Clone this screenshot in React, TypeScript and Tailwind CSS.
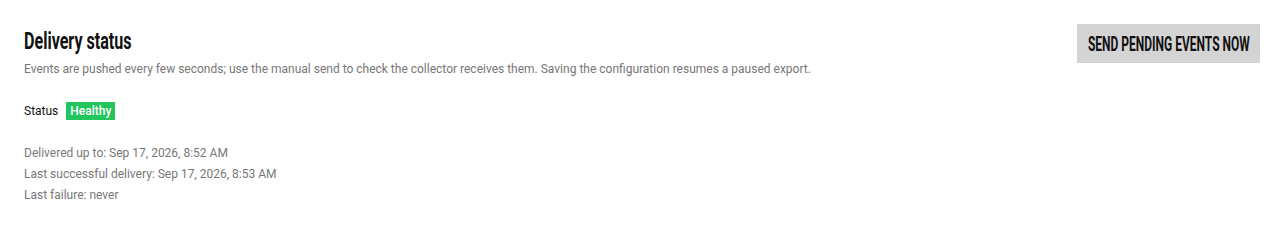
export default function App() {
  return (
    <div className="min-h-[227px] w-full bg-white font-['Roboto',sans-serif]">
      <div className="flex items-start justify-between pl-6 pr-6 pt-6">
        <div className="flex flex-col">
          <h2 className="mt-[3px] text-[24px] font-bold leading-[28px] text-[#111]">
            <span className="inline-block origin-left scale-x-[0.67] whitespace-nowrap">Delivery status</span>
          </h2>
          <p className="mt-[6px] text-[12px] leading-[16px] text-[#777]">
            Events are pushed every few seconds; use the manual send to check the collector receives them. Saving the
            configuration resumes a paused export.
          </p>
          <div className="mt-[25px] flex items-center gap-2 text-[12px] leading-[16px]">
            <span className="text-[#111]">Status</span>
            <span className="bg-[#22c55e] px-1 py-[1px] text-[12px] font-medium text-white">Healthy</span>
          </div>
          <div className="mt-[25px] flex flex-col gap-[5px] text-[12px] leading-[16px] text-[#777]">
            <span>Delivered up to: Sep 17, 2026, 8:52 AM</span>
            <span>Last successful delivery: Sep 17, 2026, 8:53 AM</span>
            <span>Last failure: never</span>
          </div>
        </div>
        <button className="flex h-[39px] w-[183px] items-center justify-center bg-[#d4d4d4] text-[20px] font-bold uppercase text-[#111]">
          <span className="inline-block shrink-0 scale-x-[0.6] whitespace-nowrap">Send pending events now</span>
        </button>
      </div>
    </div>
  );
}
